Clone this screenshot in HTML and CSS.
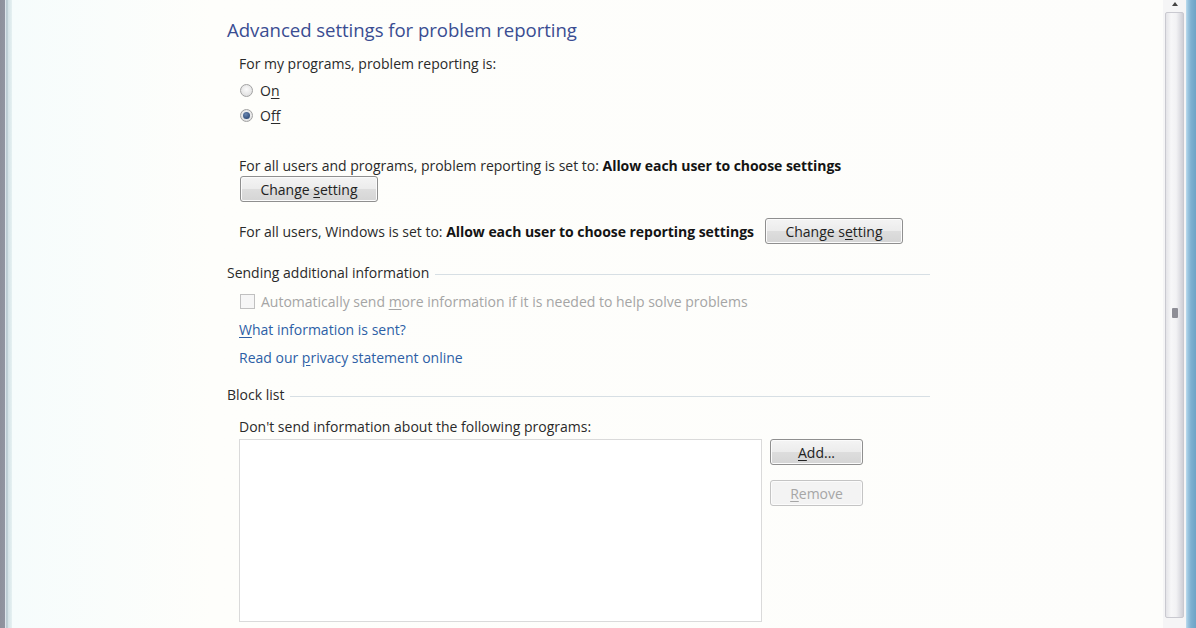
FILE: index.html
```html
<!DOCTYPE html>
<html>
<head>
<meta charset="utf-8">
<link rel="stylesheet" href="styles.css">
</head>
<body>
<div class="window">
  <div class="frame-left"></div>
  <main class="content">
    <h1 class="title">Advanced settings for problem reporting</h1>
    <div class="indent">
      <p class="line mt12">For my programs, problem reporting is:</p>
      <label class="radio-row"><span class="radio"></span><span>O<u>n</u></span></label>
      <label class="radio-row"><span class="radio checked"></span><span>O<u>f</u>f</span></label>

      <p class="line mt28">For all users and programs, problem reporting is set to: <b>Allow each user to choose settings</b></p>
      <button class="btn wide">Change <u>s</u>etting</button>

      <div class="inline-row">
        <span>For all users, Windows is set to: <b>Allow each user to choose reporting settings</b></span>
        <button class="btn wide">Change s<u>e</u>tting</button>
      </div>
    </div>

    <div class="section-head mt19"><span>Sending additional information</span><span class="rule"></span></div>
    <div class="indent">
      <label class="check-row"><span class="checkbox"></span><span>Automatically send <u>m</u>ore information if it is needed to help solve problems</span></label>
      <a class="link l1"><u>W</u>hat information is sent?</a>
      <a class="link l2">Read our <u>p</u>rivacy statement online</a>
    </div>

    <div class="section-head mt17"><span>Block list</span><span class="rule"></span></div>
    <div class="indent">
      <p class="line mt12">Don't send information about the following programs:</p>
      <div class="block-row">
        <div class="listbox"></div>
        <div class="side-btns">
          <button class="btn small"><u>A</u>dd...</button>
          <button class="btn small disabled"><u>R</u>emove</button>
        </div>
      </div>
    </div>
  </main>
  <div class="scrollbar">
    <div class="arrow-up"></div>
    <div class="thumb"><span class="grip"></span></div>
  </div>
  <div class="frame-right"></div>
</div>
</body>
</html>
```

FILE: styles.css
```css
html, body {
  margin: 0;
  padding: 0;
  height: 628px;
  overflow: hidden;
  background: #fcfefd;
}
body {
  font-family: "Open Sans", "Noto Sans", sans-serif;
  font-size: 14px;
  color: #2a2a2a;
}
.window {
  display: flex;
  height: 628px;
}
.frame-left {
  width: 12px;
  flex: none;
  background: linear-gradient(to right, #8d909b 0, #9094a0 5px, #dce4ea 5px, #dce4ea 6px, #b9cad2 6px, #c2d2d8 8px, #d3e2e6 8px, #e6f1f2 12px);
}
.content {
  flex: 1;
  padding: 18px 0 0 215px;
  background: linear-gradient(to right, #f6fcfc, #fefefb 200px, #fdfdfb);
}
.title {
  margin: 0;
  font-weight: normal;
  font-size: 18.6px;
  line-height: 24px;
  color: #3a4d92;
  letter-spacing: -0.05px;
}
.indent {
  padding-left: 12px;
  width: 690px;
}
p { margin: 0; }
.line {
  line-height: 20px;
  height: 20px;
  white-space: nowrap;
}
.mt12 { margin-top: 12px; }
.mt28 { margin-top: 28px; }
.mt19 { margin-top: 19px; }
.mt17 { margin-top: 17px; }
u { text-decoration: underline; text-underline-offset: 2px; }
b { font-weight: 700; color: #141414; letter-spacing: -0.05px; }

.radio-row {
  display: flex;
  align-items: center;
  height: 25px;
  gap: 7px;
  padding-left: 1px;
}
.radio-row:first-of-type { margin-top: 4px; }
.radio {
  width: 11px;
  height: 11px;
  border-radius: 50%;
  border: 1px solid #a2a2a2;
  background: radial-gradient(circle at 50% 40%, #fbfbfb, #d8d8d8);
  box-sizing: content-box;
  position: relative;
}
.radio.checked::after {
  content: "";
  position: absolute;
  left: 2px; top: 2px;
  width: 7px; height: 7px;
  border-radius: 50%;
  background: radial-gradient(circle at 40% 35%, #6a86b0, #1d3a66);
}

.btn {
  display: block;
  font-family: inherit;
  font-size: 14px;
  color: #222;
  height: 26px;
  padding: 0;
  border: 1px solid #8f8f8f;
  border-radius: 3px;
  background: linear-gradient(to bottom, #f4f4f4 0%, #ececec 48%, #dddddd 52%, #d5d5d5 100%);
  box-shadow: inset 0 0 0 1px #fbfbfb;
}
.btn.wide {
  width: 138px;
  margin-left: 1px;
}
.btn.small {
  width: 93px;
  height: 26px;
}
.btn.disabled {
  color: #a6a6a6;
  border-color: #c4c4c4;
  background: #f3f3f3;
}

.inline-row {
  display: flex;
  align-items: center;
  gap: 11px;
  margin-top: 16px;
  white-space: nowrap;
  height: 26px;
}
.inline-row .btn { margin-left: 0; }

.section-head {
  display: flex;
  align-items: center;
  width: 703px;
  line-height: 20px;
  height: 20px;
}
.section-head .rule {
  flex: 1;
  height: 1px;
  background: #d7dfe4;
  margin-left: 6px;
  margin-top: 2px;
}

.check-row {
  display: flex;
  align-items: center;
  gap: 6px;
  height: 20px;
  margin-top: 8px;
  color: #a5a5a5;
  white-space: nowrap;
}
.checkbox {
  width: 13px;
  height: 13px;
  border: 1px solid #c0c0c0;
  background: #f6f6f6;
  margin-left: 1px;
}
.link {
  display: block;
  color: #2d5fa6;
  line-height: 20px;
  height: 20px;
  white-space: nowrap;
}
.l1 { margin-top: 9px; }
.l2 { margin-top: 8px; }

.block-row {
  display: flex;
  gap: 8px;
  margin-top: 2px;
}
.listbox {
  width: 521px;
  height: 181px;
  border: 1px solid #dadada;
  background: #fff;
}
.side-btns {
  display: flex;
  flex-direction: column;
  gap: 15px;
}

.scrollbar {
  width: 23px;
  flex: none;
  background: #f5f5f6;
  display: flex;
  flex-direction: column;
  align-items: center;
}
.arrow-up {
  width: 0;
  height: 0;
  border-left: 3px solid transparent;
  border-right: 3px solid transparent;
  border-bottom: 4px solid #444;
  margin-top: 2px;
  margin-bottom: 6px;
}
.thumb {
  width: 19px;
  height: 606px;
  border: 1px solid #c9c9d0;
  border-radius: 2px;
  box-sizing: border-box;
  background: linear-gradient(to right, #e4e4e8, #f7f7f8 30%, #f2f2f4 60%, #cfcfd6);
  display: flex;
  align-items: center;
  justify-content: center;
}
.grip {
  width: 6px;
  height: 10px;
  background: #8e8e96;
  border-radius: 1px;
  margin-top: -4px;
}
.frame-right {
  width: 10px;
  flex: none;
  background: linear-gradient(to right, #bcdcee 0, #9cc6e0 2px, #7fb0d0 5px, #6ea3c6 10px);
}
```
